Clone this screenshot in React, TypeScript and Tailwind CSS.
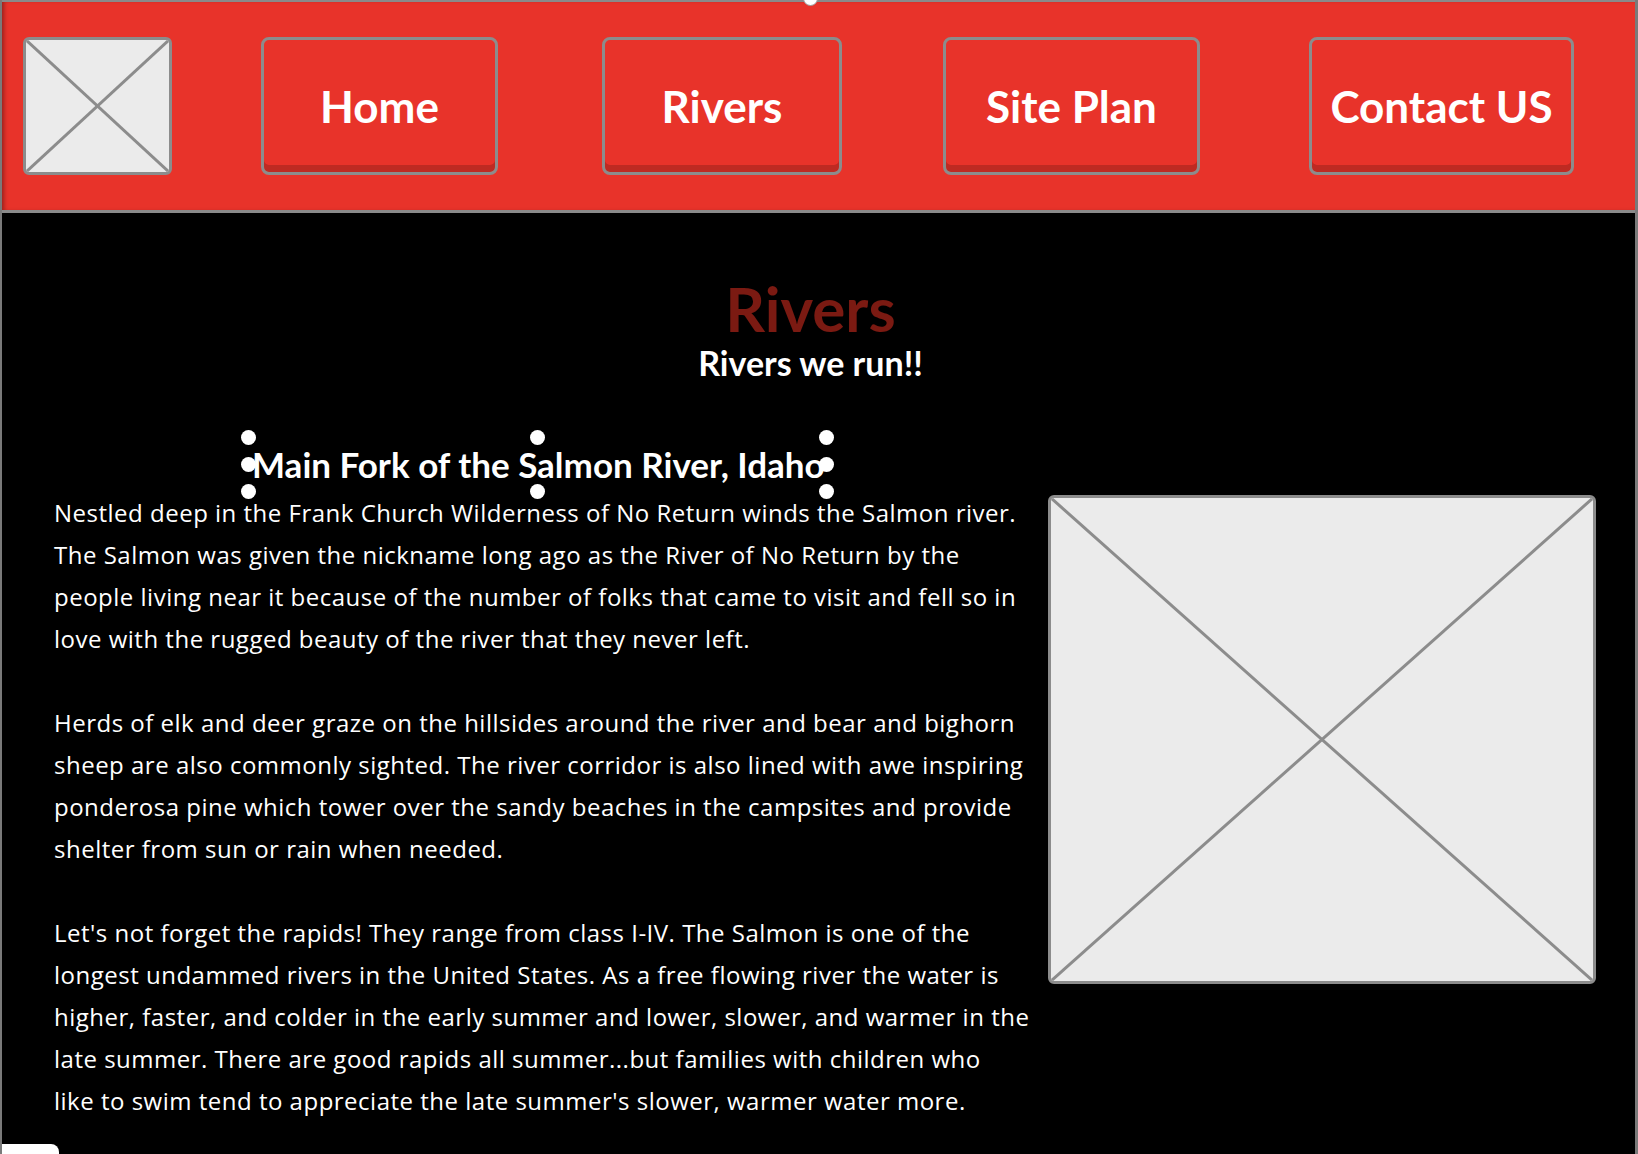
import React from 'react';

const navItems = [
  { label: 'Home', className: 'ml-[89px] w-[237px]' },
  { label: 'Rivers', className: 'ml-[104px] w-[240px]' },
  { label: 'Site Plan', className: 'ml-[101px] w-[257px]' },
  { label: 'Contact US', className: 'ml-[109px] w-[265px]' },
];

const paragraphs = [
  [
    'Nestled deep in the Frank Church Wilderness of No Return winds the Salmon river.',
    'The Salmon was given the nickname long ago as the River of No Return by the',
    'people living near it because of the number of folks that came to visit and fell so in',
    'love with the rugged beauty of the river that they never left.',
  ],
  [
    'Herds of elk and deer graze on the hillsides around the river and bear and bighorn',
    'sheep are also commonly sighted. The river corridor is also lined with awe inspiring',
    'ponderosa pine which tower over the sandy beaches in the campsites and provide',
    'shelter from sun or rain when needed.',
  ],
  [
    "Let's not forget the rapids! They range from class I-IV. The Salmon is one of the",
    'longest undammed rivers in the United States. As a free flowing river the water is',
    'higher, faster, and colder in the early summer and lower, slower, and warmer in the',
    "late summer. There are good rapids all summer...but families with children who",
    "like to swim tend to appreciate the late summer's slower, warmer water more.",
  ],
];

function Placeholder({ className }: { className: string }) {
  return (
    <div className={`relative bg-[#ebebeb] border-[3px] border-[#8c8c8c] rounded-[6px] overflow-hidden ${className}`}>
      <svg className="absolute inset-0 w-full h-full" viewBox="0 0 100 100" preserveAspectRatio="none">
        <line x1="0" y1="0" x2="100" y2="100" stroke="#8c8c8c" strokeWidth="3" vectorEffect="non-scaling-stroke" />
        <line x1="100" y1="0" x2="0" y2="100" stroke="#8c8c8c" strokeWidth="3" vectorEffect="non-scaling-stroke" />
      </svg>
    </div>
  );
}

function Dot() {
  return <span className="w-[15px] h-[15px] rounded-full bg-white" />;
}

// selection handles drawn over the heading box
function SelectionHandles() {
  return (
    <div className="absolute -inset-[7px] flex flex-col justify-between pointer-events-none">
      <div className="flex justify-between"><Dot /><Dot /><Dot /></div>
      <div className="flex justify-between"><Dot /><Dot /></div>
      <div className="flex justify-between"><Dot /><Dot /><Dot /></div>
    </div>
  );
}

export default function App() {
  return (
    <div className="relative w-full h-[1154px] bg-black overflow-hidden font-['Lato','Open_Sans',sans-serif] border-l-2 border-r-[3px] border-[#7a7a7a]">
      {/* header */}
      <header className="flex items-center h-[213px] bg-[#e8332a] border-t-2 border-b-[3px] border-[#8a8a8a] pl-[21px] shadow-[inset_4px_0_4px_-2px_rgba(0,0,0,0.35)]">
        <Placeholder className="w-[149px] h-[138px]" />
        {navItems.map((item) => (
          <button
            key={item.label}
            className={`h-[138px] flex items-center justify-center rounded-[8px] border-[3px] border-[#8c8c8c] bg-[#e8332a] shadow-[inset_0_-7px_0_#be2a22] text-white text-[44px] font-bold leading-none ${item.className}`}
          >
            {item.label}
          </button>
        ))}
      </header>

      {/* selection handle peeking at top */}
      <span className="absolute left-[801px] -top-[9px] w-[15px] h-[15px] rounded-full bg-white border border-[#999]" />

      <main>
        <div className="flex flex-col items-center pr-[16px] pt-[64px]">
          <h1 className="text-[62px] font-bold leading-none text-[#7b1a12]">Rivers</h1>
          <p className="mt-[7px] text-[34px] font-bold leading-none text-white">Rivers we run!!</p>
        </div>

        <div className="flex items-start pl-[52px] mt-[57px]">
          <div className="w-[976px]">
            <div className="relative ml-[194px] w-[579px] h-[55px] flex items-center">
              <h2 className="pl-[4px] text-[35px] font-bold leading-none text-white whitespace-nowrap">
                Main Fork of the Salmon River, Idaho
              </h2>
              <SelectionHandles />
            </div>

            <div className="text-white text-[24px] tracking-[0.5px] leading-[42px] font-['Open_Sans','Lato',sans-serif]">
              {paragraphs.map((lines, i) => (
                <p key={i} className={i > 0 ? 'mt-[42px]' : ''}>
                  {lines.map((line) => (
                    <span key={line} className="block whitespace-nowrap">
                      {line}
                    </span>
                  ))}
                </p>
              ))}
            </div>
          </div>

          <Placeholder className="ml-[18px] mt-[58px] w-[548px] h-[489px]" />
        </div>
      </main>

      {/* white tab bottom-left */}
      <div className="absolute left-0 bottom-0 w-[57px] h-[10px] bg-white rounded-tr-[8px]" />
    </div>
  );
}
